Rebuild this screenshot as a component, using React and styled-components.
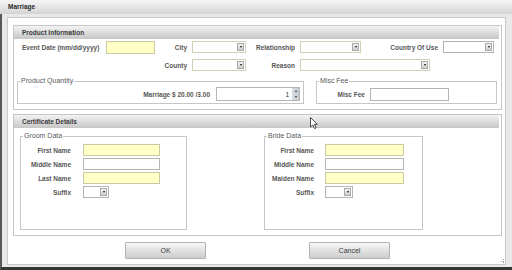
import React from 'react';
import styled, { createGlobalStyle } from 'styled-components';

const GlobalStyle = createGlobalStyle`
  html, body {
    margin: 0;
    padding: 0;
  }
  body {
    font-family: "Liberation Sans", Arial, sans-serif;
    background: #ebebeb;
  }
`;

const Dialog = styled.div`
  position: relative;
  width: 512px;
  height: 270px;
  display: flex;
  flex-direction: column;
  background: #e9e9e9;
`;

const TitleBar = styled.div`
  height: 14px;
  line-height: 14px;
  padding-left: 8px;
  font-size: 6.5px;
  font-weight: bold;
  color: #2a2a2a;
  background: linear-gradient(#f6f6f6, #d4d4d4);
`;

const Body = styled.div`
  flex: 1;
  box-sizing: border-box;
  border-left: 2px solid #595959;
  border-bottom: 3px solid #363636;
  padding: 3px 6px 2px 5px;
`;

const Panel = styled.div`
  position: relative;
  box-sizing: border-box;
  height: 248px;
  display: flex;
  flex-direction: column;
  background: #fff;
  border: 1px solid #c9c9c9;
  padding: 7px 3px 0 5px;
`;

const Section = styled.div`
  border: 1px solid #c6c6c6;
  padding: 0 2px 5px 0;
  margin-top: ${p => p.$top || 0}px;
`;

const SectionHeader = styled.div`
  height: 13px;
  line-height: 13px;
  padding-left: 8px;
  font-size: 6.5px;
  font-weight: bold;
  color: #3a3a3a;
  background: linear-gradient(#f3f3f3, #c6c6c6);
`;

const InfoGrid = styled.div`
  display: grid;
  grid-template-columns: 92px 49px 37px 54px 54px 61px 82px 51px;
  grid-auto-rows: 12px;
  row-gap: 6px;
  margin-top: 2px;
  align-items: center;
`;

const Label = styled.span`
  font-size: 6.5px;
  font-weight: bold;
  color: #575757;
  white-space: nowrap;
  text-align: ${p => (p.$left ? 'left' : 'right')};
  padding: ${p => (p.$left ? '0 0 0 8px' : '0 5px 0 0')};
`;

const TextBox = styled.div`
  box-sizing: border-box;
  width: ${p => p.$w}px;
  height: ${p => p.$h || 12}px;
  background: ${p => (p.$req ? '#ffffc6' : '#fff')};
  border: 1px solid ${p => (p.$req ? '#c9c9a8' : '#b4b4b4')};
`;

const SelectBox = styled.div`
  box-sizing: border-box;
  width: ${p => p.$w}px;
  height: 12px;
  display: flex;
  justify-content: flex-end;
  background: #fff;
  border: 1px solid ${p => (p.$tint ? '#c8d4b4' : '#b4b4b4')};
  grid-column: ${p => p.$span || 'auto'};
`;

const ArrowButton = styled.div`
  width: 7px;
  margin: 1px;
  display: flex;
  align-items: center;
  justify-content: center;
  background: linear-gradient(#f2f2f2, #cfcfcf);
  border: 1px solid #a9a9a9;
  box-sizing: border-box;

  &::after {
    content: '';
    border-left: 1.5px solid transparent;
    border-right: 1.5px solid transparent;
    border-top: 2px solid #111;
  }
`;

const FieldsetRow = styled.div`
  display: flex;
  gap: ${p => p.$gap}px;
  margin: ${p => p.$margin};
`;

const Fieldset = styled.fieldset`
  margin: 0;
  width: ${p => p.$w}px;
  box-sizing: border-box;
  border: 1px solid #c6c6c6;
  padding: ${p => p.$pad};
  min-width: 0;

  legend {
    font-size: 7px;
    line-height: 8px;
    color: #5a5a5a;
    padding: 0 1px;
    margin-left: 2px;
  }
`;

const InlineField = styled.div`
  display: flex;
  align-items: center;
  justify-content: ${p => p.$justify || 'flex-start'};
  height: 14px;
`;

const InlineLabel = styled(Label)`
  width: ${p => (p.$w ? `${p.$w}px` : 'auto')};
  padding: 0;
  margin-right: ${p => p.$gap}px;
`;

const Spinner = styled.div`
  box-sizing: border-box;
  width: 84px;
  height: 14px;
  display: flex;
  align-items: center;
  justify-content: flex-end;
  border: 1px solid #b4b4b4;
  font-size: 6.5px;
  color: #333;
`;

const SpinButtons = styled.div`
  width: 7px;
  height: 12px;
  margin-left: 3px;
  display: flex;
  flex-direction: column;
  justify-content: space-around;
  align-items: center;
  background: linear-gradient(90deg, #d8dde2, #c4cbd2);

  span {
    border-left: 1.5px solid transparent;
    border-right: 1.5px solid transparent;
  }
  span:first-child { border-bottom: 2px solid #333; }
  span:last-child { border-top: 2px solid #333; }
`;

const PersonGrid = styled.div`
  display: grid;
  grid-template-columns: ${p => p.$label}px auto;
  column-gap: ${p => p.$gap}px;
  grid-auto-rows: 12px;
  row-gap: 2px;
  align-items: center;
`;

const ButtonRow = styled.div`
  display: flex;
  justify-content: center;
  gap: 103px;
  margin-top: 6px;
`;

const Button = styled.button`
  width: 81px;
  height: 17px;
  padding: 0;
  font-family: inherit;
  font-size: 7px;
  color: #3a3a3a;
  background: linear-gradient(#f6f6f6, #cdcdcd);
  border: 1px solid #b2b2b2;
  border-radius: 1px;
`;

const Grip = styled.svg`
  position: absolute;
  right: 0;
  bottom: 0;
`;

const Cursor = styled.svg`
  position: absolute;
  left: 310px;
  top: 117px;
`;

const Select = ({ w, tint, span }) => (
  <SelectBox $w={w} $tint={tint} $span={span}>
    <ArrowButton />
  </SelectBox>
);

const PersonFields = ({ legend, width, labelWidth, gap, inputWidth, suffixWidth, third }) => (
  <Fieldset $w={width} $pad="4px 0 31px 0">
    <legend>{legend}</legend>
    <PersonGrid $label={labelWidth} $gap={gap}>
      <Label>First Name</Label>
      <TextBox $w={inputWidth} $req />
      <Label>Middle Name</Label>
      <TextBox $w={inputWidth} />
      <Label>{third}</Label>
      <TextBox $w={inputWidth} $req />
      <Label>Suffix</Label>
      <Select w={suffixWidth} />
    </PersonGrid>
  </Fieldset>
);

export default function App() {
  return (
    <>
      <GlobalStyle />
      <Dialog>
        <TitleBar>Marriage</TitleBar>
        <Body>
          <Panel>
            <Section>
              <SectionHeader>Product Information</SectionHeader>
              <InfoGrid>
                <Label $left>Event Date (mm/dd/yyyy)</Label>
                <TextBox $w={49} $h={13} $req />
                <Label>City</Label>
                <Select w={54} tint />
                <Label>Relationship</Label>
                <Select w={61} tint />
                <Label>Country Of Use</Label>
                <Select w={51} />

                <span />
                <span />
                <Label>County</Label>
                <Select w={54} tint />
                <Label>Reason</Label>
                <Select w={130} tint span="6 / 9" />
              </InfoGrid>
              <FieldsetRow $gap={12} $margin="6px 0 0 3px">
                <Fieldset $w={287} $pad="2px 3px 2px 0">
                  <legend>Product Quantity</legend>
                  <InlineField $justify="flex-end">
                    <InlineLabel $gap={6}>Marriage $ 20.00 /3.00</InlineLabel>
                    <Spinner>
                      1
                      <SpinButtons>
                        <span />
                        <span />
                      </SpinButtons>
                    </Spinner>
                  </InlineField>
                </Fieldset>
                <Fieldset $w={181} $pad="2px 0 2px 0">
                  <legend>Misc Fee</legend>
                  <InlineField>
                    <InlineLabel $w={48} $gap={5} style={{ textAlign: 'right' }}>Misc Fee</InlineLabel>
                    <TextBox $w={79} $h={13} />
                  </InlineField>
                </Fieldset>
              </FieldsetRow>
            </Section>

            <Section $top={4}>
              <SectionHeader>Certificate Details</SectionHeader>
              <FieldsetRow $gap={77} $margin="4px 0 0 6px">
                <PersonFields
                  legend="Groom Data"
                  width={167}
                  labelWidth={55}
                  gap={7}
                  inputWidth={77}
                  suffixWidth={26}
                  third="Last Name"
                />
                <PersonFields
                  legend="Bride Data"
                  width={159}
                  labelWidth={54}
                  gap={6}
                  inputWidth={79}
                  suffixWidth={28}
                  third="Maiden Name"
                />
              </FieldsetRow>
            </Section>

            <ButtonRow>
              <Button>OK</Button>
              <Button>Cancel</Button>
            </ButtonRow>

            <Grip width="5" height="5" viewBox="0 0 5 5">
              <rect x="3" y="0" width="1" height="1" fill="#999" />
              <rect x="1" y="2" width="1" height="1" fill="#999" />
              <rect x="3" y="2" width="1" height="1" fill="#999" />
              <rect x="3" y="3" width="1" height="1" fill="#999" />
            </Grip>
          </Panel>
        </Body>
        <Cursor width="9" height="13" viewBox="0 0 9 13">
          <path
            d="M0.5 0.5 L0.5 10 L2.8 7.9 L4.6 11.6 L6.1 10.9 L4.4 7.3 L7.3 7.3 Z"
            fill="#fff"
            stroke="#222"
            strokeWidth="0.8"
            strokeLinejoin="round"
          />
        </Cursor>
      </Dialog>
    </>
  );
}
